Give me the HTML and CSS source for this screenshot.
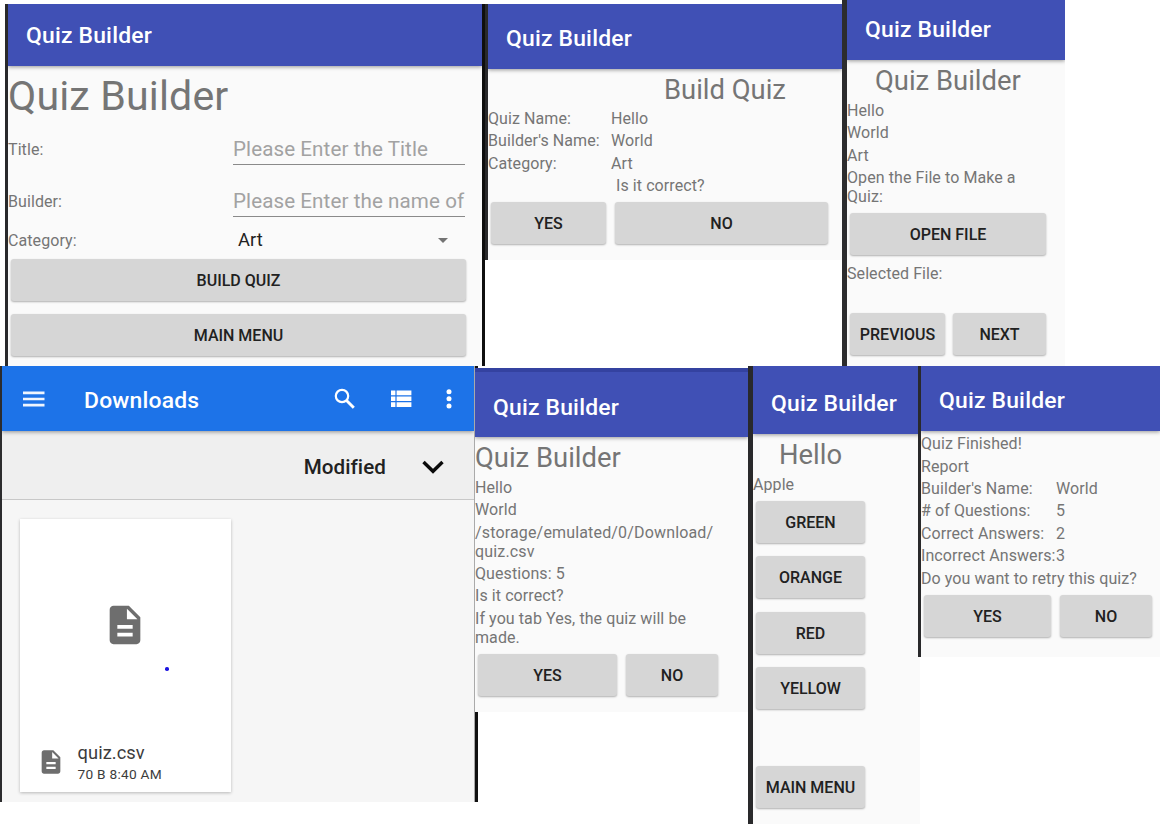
FILE: index.html
```html
<!DOCTYPE html>
<html lang="en">
<head>
<meta charset="utf-8">
<title>Quiz Builder</title>
<link rel="stylesheet" href="styles.css">
</head>
<body>
<div class="board">
  <div class="band band-top">
    <section class="screen entry">
      <header class="bar">Quiz Builder</header>
      <div class="body">
        <h1 class="headline"><span>Quiz Builder</span></h1>
        <div class="field"><label>Title:</label><div class="input">Please Enter the Title</div></div>
        <div class="field"><label>Builder:</label><div class="input">Please Enter the name of</div></div>
        <div class="field pick"><label>Category:</label><div class="select"><span>Art</span><i class="caret"></i></div></div>
        <div class="stack"><button class="btn">BUILD QUIZ</button><button class="btn">MAIN MENU</button></div>
      </div>
    </section>
    <section class="screen confirm">
      <header class="bar">Quiz Builder</header>
      <div class="body">
        <h2 class="title"><span>Build Quiz</span></h2>
        <div class="row"><span>Quiz Name:</span><span>Hello</span></div>
        <div class="row"><span>Builder's Name:</span><span>World</span></div>
        <div class="row"><span>Category:</span><span>Art</span></div>
        <div class="row"><span></span><span class="ask">Is it correct?</span></div>
        <div class="actions"><button class="btn">YES</button><button class="btn">NO</button></div>
      </div>
    </section>
    <section class="screen open">
      <header class="bar">Quiz Builder</header>
      <div class="body">
        <h2 class="title"><span>Quiz Builder</span></h2>
        <p class="line">Hello</p>
        <p class="line">World</p>
        <p class="line">Art</p>
        <p class="para">Open the File to Make a<br>Quiz:</p>
        <div class="stack"><button class="btn">OPEN FILE</button></div>
        <p class="line selected">Selected File:</p>
        <div class="actions"><button class="btn">PREVIOUS</button><button class="btn">NEXT</button></div>
      </div>
    </section>
  </div>
  <div class="band band-bottom">
    <section class="screen files">
      <header class="bar blue">
        <svg class="menu" width="22" height="16" viewBox="0 0 22 16"><path d="M0 1.9h21.5M0 8h21.5M0 14.1h21.5" stroke="#fff" stroke-opacity=".93" stroke-width="2.6"/></svg>
        <span class="place">Downloads</span>
        <svg class="search" width="22" height="22" viewBox="0 0 22 22"><circle cx="8" cy="8" r="6.2" fill="none" stroke="#fff" stroke-width="2.2"/><path d="M12.5 12.5l7.3 7.3" stroke="#fff" stroke-width="2.9"/></svg>
        <svg class="list" width="21" height="18" viewBox="0 0 21 18"><path fill="#fff" d="M0 .5h4.4v4.8H0zM5.6 .5H20.4v4.8H5.6zM0 6.5h4.4v4.6H0zM5.6 6.5H20.4v4.6H5.6zM0 12.3h4.4v4.8H0zM5.6 12.3H20.4v4.8H5.6z"/></svg>
        <svg class="more" width="6" height="20" viewBox="0 0 6 20"><g fill="#fff"><circle cx="3" cy="2.7" r="2.5"/><circle cx="3" cy="9.8" r="2.5"/><circle cx="3" cy="16.9" r="2.5"/></g></svg>
      </header>
      <div class="sort"><span>Modified</span><svg width="22" height="14" viewBox="0 0 22 14"><path d="M1.5 2l9.5 9.3L20.5 2" fill="none" stroke="#0a0a0a" stroke-width="3.4"/></svg></div>
      <div class="grid">
        <article class="card">
          <div class="preview">
            <svg width="46" height="46" viewBox="0 0 24 24"><path fill="#6e6e6e" d="M14 2H6c-1.1 0-1.99.9-1.99 2L4 20c0 1.1.89 2 1.99 2H18c1.1 0 2-.9 2-2V8l-6-6zm2 16H8v-2h8v2zm0-4H8v-2h8v2zm-3-5V3.5L18.5 9H13z"/></svg>
            <i class="dot"></i>
          </div>
          <div class="meta">
            <svg width="28" height="28" viewBox="0 0 24 24"><path fill="#6e6e6e" d="M14 2H6c-1.1 0-1.99.9-1.99 2L4 20c0 1.1.89 2 1.99 2H18c1.1 0 2-.9 2-2V8l-6-6zm2 16H8v-2h8v2zm0-4H8v-2h8v2zm-3-5V3.5L18.5 9H13z"/></svg>
            <div><div class="name">quiz.csv</div><div class="info">70 B 8:40 AM</div></div>
          </div>
        </article>
      </div>
    </section>
    <div class="column">
      <div class="cap"></div>
      <section class="screen loaded">
        <header class="bar">Quiz Builder</header>
        <div class="body">
          <h2 class="title"><span>Quiz Builder</span></h2>
          <p class="line">Hello</p>
          <p class="line">World</p>
          <p class="para path">/storage/emulated/0/Download/<br>quiz.csv</p>
          <p class="line">Questions: 5</p>
          <p class="line">Is it correct?</p>
          <p class="para">If you tab Yes, the quiz will be<br>made.</p>
          <div class="actions"><button class="btn">YES</button><button class="btn">NO</button></div>
        </div>
      </section>
      <div class="tail"></div>
    </div>
    <section class="screen question">
      <header class="bar">Quiz Builder</header>
      <div class="body">
        <h2 class="title"><span>Hello</span></h2>
        <p class="line">Apple</p>
        <div class="stack">
          <button class="btn">GREEN</button><button class="btn">ORANGE</button><button class="btn">RED</button><button class="btn">YELLOW</button>
        </div>
        <button class="btn home">MAIN MENU</button>
      </div>
    </section>
    <section class="screen report">
      <header class="bar">Quiz Builder</header>
      <div class="body">
        <p class="line">Quiz Finished!</p>
        <p class="line">Report</p>
        <div class="row"><span>Builder's Name:</span><span>World</span></div>
        <div class="row"><span># of Questions:</span><span>5</span></div>
        <div class="row"><span>Correct Answers:</span><span>2</span></div>
        <div class="row"><span>Incorrect Answers:</span><span>3</span></div>
        <p class="line">Do you want to retry this quiz?</p>
        <div class="actions"><button class="btn">YES</button><button class="btn">NO</button></div>
      </div>
    </section>
  </div>
</div>
</body>
</html>
```

FILE: styles.css
```css
* { box-sizing: border-box; }
body { margin: 0; background: #fff; font-family: Roboto, "Liberation Sans", sans-serif; }
h1, h2, p { margin: 0; font-weight: 400; }
.board { width: 1160px; height: 824px; overflow: hidden; }
.band { display: flex; align-items: flex-start; }
.band-top { height: 366px; }
.band-bottom { height: 458px; }

.screen { background: #fafafa; color: #757575; font-size: 16px; letter-spacing: .08px; display: flex; flex-direction: column; flex: none; overflow: hidden; }
.bar { flex: none; display: flex; align-items: center; height: 65px; padding-left: 18px; background: #4050b5; color: #fff; font-size: 22.9px; font-weight: 500; letter-spacing: .2px; box-shadow: 0 1px 4px rgba(0,0,0,.4); white-space: nowrap; }
.title { height: 38.8px; line-height: 43px; font-size: 27.4px; letter-spacing: 0; white-space: nowrap; }
.line, .row { height: 22.4px; line-height: 24.2px; white-space: nowrap; }
.row { display: grid; }
.para { height: 41.1px; padding-top: 2.5px; line-height: 19px; white-space: nowrap; }

.btn { display: block; height: 42px; padding: 1px 0 0; border: 0; border-radius: 3px; background: #d6d6d6; color: #212121; font: 500 16px Roboto, "Liberation Sans", sans-serif; text-align: center; box-shadow: 0 1px 2px rgba(0,0,0,.3); white-space: nowrap; }
.stack { display: flex; flex-direction: column; gap: 13.2px; padding: 6px 0 0 3px; }
.actions { display: grid; gap: 9px; padding: 6px 0 0 3px; }

.entry { width: 480px; height: 362px; margin: 4px 0 0 5px; border-left: 3px solid #29292b; border-right: 3px solid #0e0e0e; }
.entry .bar { height: 62px; }
.headline { height: 57px; line-height: 60px; font-size: 41.1px; letter-spacing: .15px; }
.field { display: grid; grid-template-columns: 225px 232px; height: 52px; align-items: center; padding-top: 1px; }
.input { height: 33px; margin-top: -3px; border-bottom: 1.5px solid #8a8a8a; color: #a2a2a2; font-size: 20.6px; line-height: 34px; white-space: nowrap; align-self: center; }
.pick { height: 26px; padding: 0; }
.select { display: flex; justify-content: space-between; align-items: center; padding: 0 17px 0 5px; color: #212121; font-size: 18.3px; line-height: 26px; }
.caret { border: 5.5px solid transparent; border-top-color: #737373; border-bottom: 0; }
.entry .stack { width: 458px; }

.confirm { width: 357px; height: 256px; margin-top: 4px; border-left: 3px solid #29292b; }
.confirm .bar { padding-top: 4px; }
.confirm .title { padding-left: 176px; height: 37.8px; }
.confirm .row { grid-template-columns: 123px 1fr; }
.confirm .ask { padding-left: 5px; }
.confirm .actions { grid-template-columns: 115px 213px; }

.open { width: 223px; height: 366px; border-left: 5px solid #2c2c2e; }
.open .bar { height: 60px; padding-bottom: 2px; }
.open .title { padding-left: 28px; }
.open .stack { width: 199px; }
.selected { margin-top: 7px; }
.open .actions { grid-template-columns: 95px 93px; gap: 8px; padding-top: 28.5px; }

.files { width: 475px; height: 436px; border-left: 2px solid #2c2c2e; border-right: 1px solid #aaa; background: #f6f6f6; }
.blue { position: relative; z-index: 1; padding: 0 21px 0 20.5px; background: #1d73e8; }
.place { margin: 3px auto 0 39.5px; }
.search { margin: 0 35px 0 0; }
.list { margin-right: 34px; }
.blue .more { margin-right: 1px; }
.sort { flex: none; display: flex; align-items: center; justify-content: flex-end; gap: 36px; height: 69px; padding: 3px 30px 0 0; background: #efefef; border-bottom: 1px solid #c8c8c8; color: #212121; font-size: 20.6px; font-weight: 500; }
.grid { padding: 19px 0 0 18px; }
.card { width: 211px; height: 273px; display: flex; flex-direction: column; background: #fff; box-shadow: 0 1px 3px rgba(0,0,0,.25); }
.preview { position: relative; height: 211px; display: grid; place-items: center; padding-right: 2px; }
.dot { position: absolute; left: 145px; top: 148px; width: 3.5px; height: 3.5px; border-radius: 50%; background: #1c14e0; }
.meta { display: flex; align-items: center; gap: 12.5px; padding: 10px 0 0 17px; color: #3c3c3c; }
.name { padding-top: 1px; font-size: 18.3px; line-height: 24px; }
.info { font-size: 13.7px; line-height: 19px; letter-spacing: .25px; }

.column { flex: none; width: 273px; }
.cap { width: 3px; height: 2px; background: #111; }
.tail { width: 3px; height: 90px; background: #111; }
.loaded { height: 344px; }
.loaded .bar { height: 69px; padding-top: 5px; border-top: 4px solid #3442a0; }
.loaded .actions { grid-template-columns: 139px 92px; }
.path { letter-spacing: .16px; }

.question { width: 172px; height: 458px; border-left: 5px solid #29292b; }
.question .bar { height: 68px; padding-top: 6px; }
.question .title { padding-left: 26px; }
.question .stack { width: 112px; }
.home { width: 109px; margin: 57px 0 0 3px; }

.report { width: 242px; height: 291px; margin-left: -2px; border-left: 3px solid #29292b; }
.report .bar { padding-top: 3px; }
.report .body { padding-top: 1.3px; }
.report .row { grid-template-columns: 135px 1fr; }
.report .actions { grid-template-columns: 127px 92px; }
```
